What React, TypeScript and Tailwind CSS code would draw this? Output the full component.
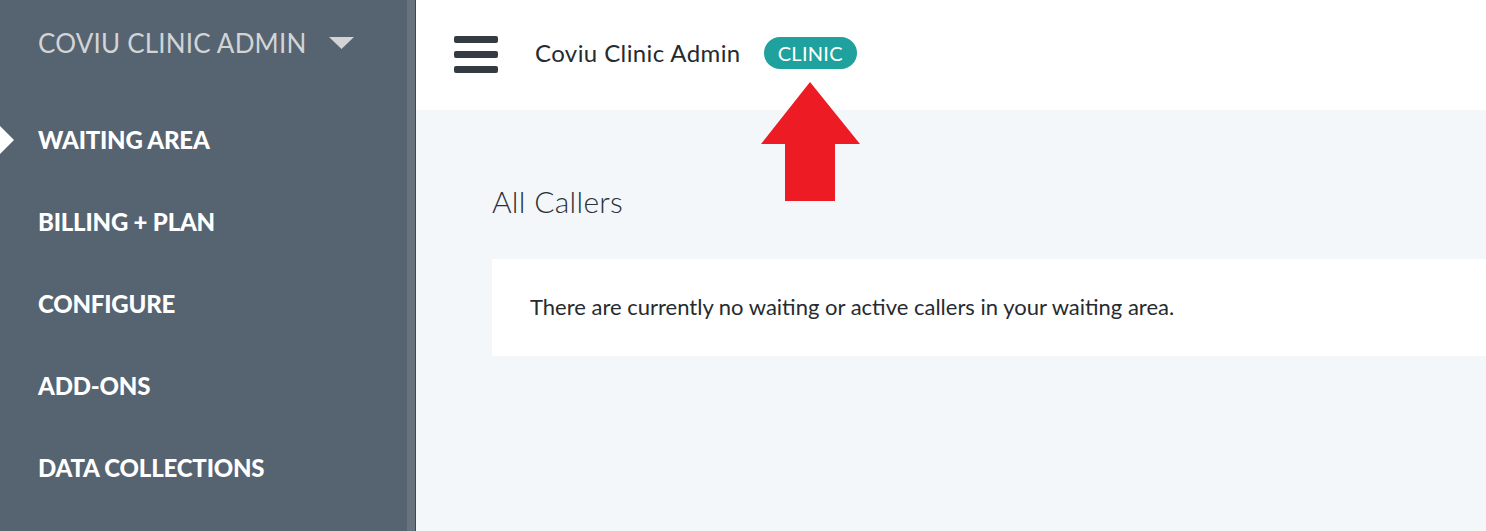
import React from "react";

const nav = ["WAITING AREA", "BILLING + PLAN", "CONFIGURE", "ADD-ONS", "DATA COLLECTIONS"];

export default function App() {
  return (
    <div className="flex h-[531px] w-[1486px] overflow-hidden" style={{ fontFamily: "Lato, 'Open Sans', sans-serif" }}>
      <aside className="flex w-[416px] shrink-0 bg-[#566370]">
        <div className="flex flex-1 flex-col">
          <div className="flex h-[86px] items-center pl-[38px]">
            <span className="text-[26px] leading-none text-[#d2d4d6] tracking-[0.2px]">COVIU CLINIC ADMIN</span>
            <svg className="ml-[22px]" width="25" height="12" viewBox="0 0 25 12">
              <polygon points="0,0 25,0 12.5,12" fill="#d2d4d6" />
            </svg>
          </div>
          <nav className="flex flex-col pt-[13px]">
            {nav.map((n, i) => (
              <div key={n} className="relative flex h-[82px] items-center pl-[38px]">
                {i === 0 && (
                  <svg className="absolute left-0 top-[27px]" width="14" height="28" viewBox="0 0 14 28">
                    <polygon points="0,0 14,14 0,28" fill="#ffffff" />
                  </svg>
                )}
                <span className="text-[24px] font-black leading-none text-white tracking-[-0.2px]">{n}</span>
              </div>
            ))}
          </nav>
        </div>
        <div className="w-[8px] bg-[#68737f]" />
        <div className="w-px bg-[#3f4852]" />
      </aside>
      <main className="flex flex-1 flex-col bg-[#f4f7fa]">
        <header className="relative flex h-[110px] shrink-0 items-center bg-white pl-[38px]">
          <svg width="44" height="37" viewBox="0 0 44 37" className="-mt-[2px]">
            <rect x="0" y="0" width="44" height="7" rx="2" fill="#343b43" />
            <rect x="0" y="15" width="44" height="7" rx="2" fill="#343b43" />
            <rect x="0" y="30" width="44" height="7" rx="2" fill="#343b43" />
          </svg>
          <span className="ml-[37px] text-[24px] leading-none text-[#262b30] -mt-[4px] tracking-[0.4px]">Coviu Clinic Admin</span>
          <span className="ml-[23px] -mt-[4px] flex h-[32px] items-center rounded-full bg-[#1fa19d] px-[14px] text-[20px] leading-none text-white tracking-[0.3px]">CLINIC</span>
          <svg className="absolute left-[345px] top-[82px]" width="100" height="120" viewBox="0 0 100 120">
            <polygon points="49,0 99,62 74,62 74,119 24,119 24,62 0,62" fill="#ed1c24" />
          </svg>
        </header>
        <div className="pl-[76px] pt-[76px]">
          <h1 className="text-[30px] font-light leading-none text-[#2b3138] tracking-[0.3px]">All Callers</h1>
          <div className="mt-[43px] flex h-[97px] items-center bg-white pl-[38px]">
            <p className="text-[22px] leading-none text-[#262b30] -mt-[2px]">There are currently no waiting or active callers in your waiting area.</p>
          </div>
        </div>
      </main>
    </div>
  );
}
